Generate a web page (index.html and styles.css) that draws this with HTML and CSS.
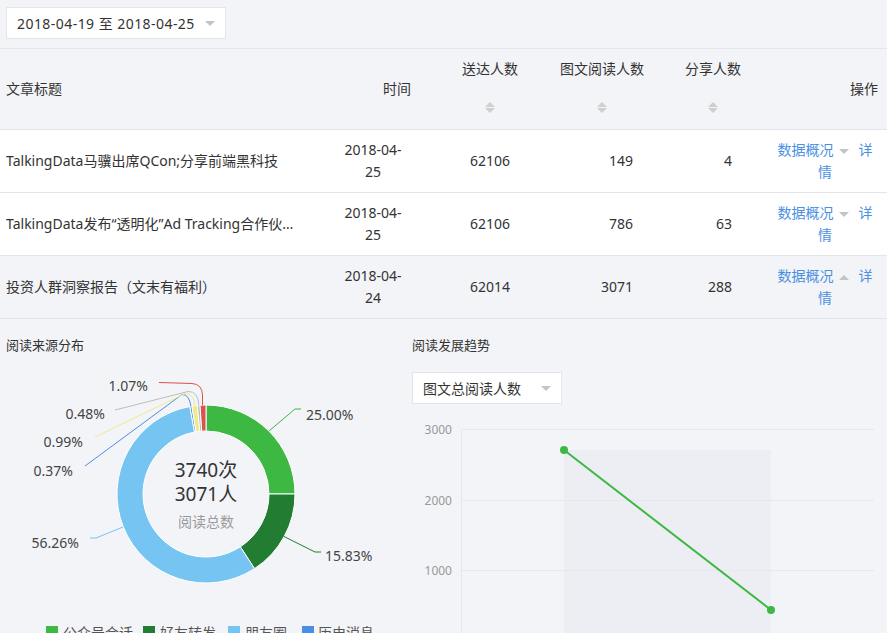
FILE: index.html
```html
<!DOCTYPE html>
<html lang="zh-CN">
<head>
<meta charset="utf-8">
<title>文章数据</title>
<link rel="stylesheet" href="styles.css">
</head>
<body>
<div class="toolbar">
  <div class="picker">
    <span class="picker-text">2018-04-19 至 2018-04-25</span>
    <svg class="caret" width="10" height="5" viewBox="0 0 10 5"><path d="M0 0H10L5 5Z"/></svg>
  </div>
</div>

<div class="table">
  <div class="row head">
    <div class="cell c-title">文章标题</div>
    <div class="cell c-time">时间</div>
    <div class="cell c-send sortable"><span class="label">送达人数</span><svg class="sorter" width="10" height="11" viewBox="0 0 10 11"><path d="M0 5L5 0L10 5Z M0 6L5 11L10 6Z"/></svg></div>
    <div class="cell c-read sortable"><span class="label">图文阅读人数</span><svg class="sorter" width="10" height="11" viewBox="0 0 10 11"><path d="M0 5L5 0L10 5Z M0 6L5 11L10 6Z"/></svg></div>
    <div class="cell c-share sortable"><span class="label">分享人数</span><svg class="sorter" width="10" height="11" viewBox="0 0 10 11"><path d="M0 5L5 0L10 5Z M0 6L5 11L10 6Z"/></svg></div>
    <div class="cell c-op">操作</div>
  </div>

  <div class="row">
    <div class="cell c-title"><span class="ellipsis">TalkingData马骥出席QCon;分享前端黑科技</span></div>
    <div class="cell c-time"><span>2018-04-<wbr>25</span></div>
    <div class="cell c-send">62106</div>
    <div class="cell c-read">149</div>
    <div class="cell c-share">4</div>
    <div class="cell c-op"><span>数据概况<svg class="op-caret" width="10" height="5" viewBox="0 0 10 5"><path d="M0 0H10L5 5Z"/></svg>详情</span></div>
  </div>

  <div class="row">
    <div class="cell c-title"><span class="ellipsis">TalkingData发布“透明化”Ad Tracking合作伙伴名单</span></div>
    <div class="cell c-time"><span>2018-04-<wbr>25</span></div>
    <div class="cell c-send">62106</div>
    <div class="cell c-read">786</div>
    <div class="cell c-share">63</div>
    <div class="cell c-op"><span>数据概况<svg class="op-caret" width="10" height="5" viewBox="0 0 10 5"><path d="M0 0H10L5 5Z"/></svg>详情</span></div>
  </div>

  <div class="row active">
    <div class="cell c-title"><span class="ellipsis">投资人群洞察报告（文末有福利）</span></div>
    <div class="cell c-time"><span>2018-04-<wbr>24</span></div>
    <div class="cell c-send">62014</div>
    <div class="cell c-read">3071</div>
    <div class="cell c-share">288</div>
    <div class="cell c-op"><span>数据概况<svg class="op-caret" width="10" height="5" viewBox="0 0 10 5"><path d="M0 5H10L5 0Z"/></svg>详情</span></div>
  </div>
</div>

<div class="charts">
  <div class="panel panel-left">
    <div class="panel-title">阅读来源分布</div>
    <svg class="chart donut" width="406" height="278" viewBox="0 0 406 278">
      <g stroke="#fff" stroke-width="1">
        <path fill="#3db843" d="M206,50 A89,89 0 0 1 295,139 L269,139 A63,63 0 0 0 206,76 Z"/>
        <path fill="#227c32" d="M295,139 A89,89 0 0 1 254.5,213.63 L240.33,191.83 A63,63 0 0 0 269,139 Z"/>
        <path fill="#75c4f2" d="M254.5,213.63 A89,89 0 1 1 189.82,51.49 L194.55,77.05 A63,63 0 1 0 240.33,191.83 Z"/>
        <path fill="#4a8fe6" d="M189.82,51.49 A89,89 0 0 1 191.86,51.13 L195.99,76.8 A63,63 0 0 0 194.55,77.05 Z"/>
        <path fill="#ecec8e" d="M191.86,51.13 A89,89 0 0 1 197.35,50.42 L199.87,76.3 A63,63 0 0 0 195.99,76.8 Z"/>
        <path fill="#bdbdbd" d="M197.35,50.42 A89,89 0 0 1 200.02,50.2 L201.77,76.14 A63,63 0 0 0 199.87,76.3 Z"/>
        <path fill="#d9534f" d="M200.02,50.2 A89,89 0 0 1 206,50 L206,76 A63,63 0 0 0 201.77,76.14 Z"/>
      </g>
      <g fill="none" stroke-width="1">
        <path stroke="#3db843" d="M269,76 L295,54 L301,54"/>
        <path stroke="#227c32" d="M284,181.5 L315,197 L321,197"/>
        <path stroke="#75c4f2" d="M123,172 L96,183 L90,183"/>
        <path stroke="#4a8fe6" d="M191,51.5 Q189,39 182,39.5 L85,111"/>
        <path stroke="#ecec8e" d="M195,51 Q194,38 185,38.5 L95,82"/>
        <path stroke="#bdbdbd" d="M199,50.5 Q198,36 188,36.5 L115,55"/>
        <path stroke="#d9534f" d="M202.5,50 L202.5,40 Q202,29 192,28.5 L159,27.5"/>
      </g>
      <g class="pct">
        <text x="306" y="65">25.00%</text>
        <text x="325" y="206">15.83%</text>
        <text x="79" y="193" text-anchor="end">56.26%</text>
        <text x="73" y="121" text-anchor="end">0.37%</text>
        <text x="83" y="92" text-anchor="end">0.99%</text>
        <text x="105" y="64" text-anchor="end">0.48%</text>
        <text x="148" y="36" text-anchor="end">1.07%</text>
      </g>
      <text class="big" x="206" y="122" text-anchor="middle">3740次</text>
      <text class="big" x="206" y="146" text-anchor="middle">3071人</text>
      <text class="sub" x="206" y="172" text-anchor="middle">阅读总数</text>
      <g class="legend">
        <rect x="46" y="271" width="12" height="12" fill="#3db843"/>
        <text x="63" y="283">公众号会话</text>
        <rect x="143" y="271" width="12" height="12" fill="#227c32"/>
        <text x="160" y="283">好友转发</text>
        <rect x="228" y="271" width="12" height="12" fill="#75c4f2"/>
        <text x="245" y="283">朋友圈</text>
        <rect x="302" y="271" width="12" height="12" fill="#4a8fe6"/>
        <text x="318" y="283">历史消息</text>
      </g>
    </svg>
  </div>

  <div class="panel panel-right">
    <div class="panel-title">阅读发展趋势</div>
    <div class="select">
      <span>图文总阅读人数</span>
      <svg class="caret" width="10" height="5" viewBox="0 0 10 5"><path d="M0 0H10L5 5Z"/></svg>
    </div>
    <svg class="chart trend" width="481" height="223" viewBox="0 0 481 223">
      <rect x="158" y="40" width="207" height="183" fill="#eceef4"/>
      <g stroke="#e6e8ee" stroke-width="1">
        <line x1="56" y1="19.5" x2="468" y2="19.5"/>
        <line x1="56" y1="90.5" x2="468" y2="90.5"/>
        <line x1="56" y1="160.5" x2="468" y2="160.5"/>
        <line x1="55.5" y1="19.5" x2="55.5" y2="223"/>
      </g>
      <g class="axis">
        <text x="46" y="24" text-anchor="end">3000</text>
        <text x="46" y="95" text-anchor="end">2000</text>
        <text x="46" y="165" text-anchor="end">1000</text>
      </g>
      <line x1="158" y1="40" x2="365" y2="200" stroke="#3db843" stroke-width="2"/>
      <circle cx="158" cy="40" r="4" fill="#3db843"/>
      <circle cx="365" cy="200" r="4" fill="#3db843"/>
    </svg>
  </div>
</div>
</body>
</html>
```

FILE: styles.css
```css
* {
  box-sizing: border-box;
}

html, body {
  margin: 0;
  padding: 0;
}

body {
  width: 887px;
  height: 633px;
  overflow: hidden;
  background: #f3f4f8;
  font-family: "Noto Sans", "Noto Sans CJK SC", sans-serif;
  font-size: 14px;
  color: #333;
}

/* toolbar / date picker */
.toolbar {
  height: 49px;
  padding: 7px 6px 0;
  border-bottom: 1px solid #e3e5ea;
}

.picker {
  width: 220px;
  height: 32px;
  background: #fff;
  border: 1px solid #e3e5ea;
  display: flex;
  align-items: center;
  justify-content: space-between;
  padding: 0 10px;
  white-space: nowrap;
}

.picker-text {
  letter-spacing: 0.45px;
}

.caret path {
  fill: #c4c4c4;
}

/* table */
.row {
  display: grid;
  grid-template-columns: 335px 85px 140px 84px 131px 112px;
  height: 63px;
  background: #fff;
  border-bottom: 1px solid #e3e5ea;
}

.row.head {
  height: 81px;
  background: transparent;
}

.row.active {
  background: transparent;
}

.cell {
  display: flex;
  align-items: center;
  line-height: 22px;
  min-width: 0;
}

.c-title {
  padding: 0 33px 0 6px;
}

.ellipsis {
  display: block;
  white-space: nowrap;
  overflow: hidden;
  text-overflow: ellipsis;
}

.c-time {
  justify-content: center;
  text-align: center;
  padding: 0 14px 0 5px;
}

.c-send {
  justify-content: center;
}

.c-read {
  justify-content: flex-end;
  padding-right: 11px;
}

.c-share {
  justify-content: flex-end;
  padding-right: 43px;
}

.c-op {
  justify-content: center;
  text-align: center;
  padding: 0 12px 0 0;
  color: #4a90e2;
}

.op-caret {
  display: inline-block;
  margin: 0 10px 0 5px;
  vertical-align: middle;
}

.op-caret path {
  fill: #c4c4c4;
}

.head .c-time {
  justify-content: flex-end;
  padding: 0 9px 0 0;
}

.head .c-op {
  justify-content: flex-end;
  padding: 0 9px 0 0;
  color: #333;
}

.head .sortable {
  flex-direction: column;
  justify-content: flex-start;
  align-items: center;
  padding: 10px 0 0;
}

.head .c-share {
  padding-left: 7px;
}

.label {
  line-height: 20px;
  white-space: nowrap;
}

.sorter {
  display: block;
  margin-top: 23px;
}

.sorter path {
  fill: #cfcfcf;
}

/* charts */
.charts {
  display: flex;
}

.panel-left {
  width: 406px;
}

.panel-right {
  flex: 1;
}

.panel-title {
  padding: 16px 0 0 6px;
  line-height: 20px;
  font-size: 13px;
  color: #333;
}

.select {
  margin: 17px 0 0 6px;
  width: 150px;
  height: 32px;
  background: #fff;
  border: 1px solid #e3e5ea;
  display: flex;
  align-items: center;
  justify-content: space-between;
  padding: 0 10px;
  white-space: nowrap;
}

.chart {
  display: block;
}

.trend {
  margin-top: 6px;
}

.chart text {
  font-family: "Noto Sans", "Noto Sans CJK SC", sans-serif;
}

.pct text {
  font-size: 14px;
  fill: #444;
}

.big {
  font-size: 19px;
  fill: #333;
}

.sub {
  font-size: 14px;
  fill: #9a9a9a;
}

.legend text {
  font-size: 14px;
  fill: #555;
}

.axis text {
  font-size: 12px;
  fill: #999;
}
```
